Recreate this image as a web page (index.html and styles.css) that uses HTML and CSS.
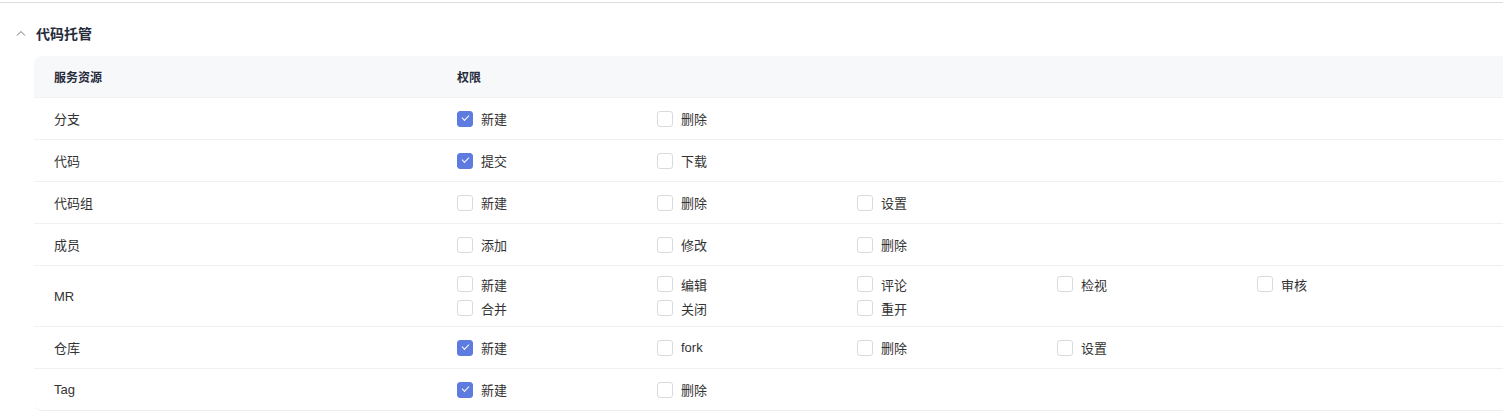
FILE: index.html
```html
<!DOCTYPE html>
<html lang="zh-CN">

<head>
  <meta charset="UTF-8">
  <meta name="viewport" content="width=device-width, initial-scale=1.0">
  <title>代码托管</title>
  <link rel="stylesheet" href="styles.css">
</head>

<body>
  <div class="topline"></div>

  <div class="section">
    <div class="section-title">
      <svg class="chevron" width="10" height="6" viewBox="0 0 10 6">
        <polyline points="1,5.5 5,1.5 9,5.5" fill="none" stroke="#71757f" stroke-width="1" />
      </svg>
      <span>代码托管</span>
    </div>

    <div class="table">
      <div class="row head">
        <div class="name">服务资源</div>
        <div class="perms">权限</div>
      </div>

      <div class="row">
        <div class="name">分支</div>
        <div class="perms">
          <label class="item checked"><i class="box"></i>新建</label>
          <label class="item"><i class="box"></i>删除</label>
        </div>
      </div>

      <div class="row">
        <div class="name">代码</div>
        <div class="perms">
          <label class="item checked"><i class="box"></i>提交</label>
          <label class="item"><i class="box"></i>下载</label>
        </div>
      </div>

      <div class="row">
        <div class="name">代码组</div>
        <div class="perms">
          <label class="item"><i class="box"></i>新建</label>
          <label class="item"><i class="box"></i>删除</label>
          <label class="item"><i class="box"></i>设置</label>
        </div>
      </div>

      <div class="row">
        <div class="name">成员</div>
        <div class="perms">
          <label class="item"><i class="box"></i>添加</label>
          <label class="item"><i class="box"></i>修改</label>
          <label class="item"><i class="box"></i>删除</label>
        </div>
      </div>

      <div class="row">
        <div class="name">MR</div>
        <div class="perms">
          <label class="item"><i class="box"></i>新建</label>
          <label class="item"><i class="box"></i>编辑</label>
          <label class="item"><i class="box"></i>评论</label>
          <label class="item"><i class="box"></i>检视</label>
          <label class="item"><i class="box"></i>审核</label>
          <label class="item"><i class="box"></i>合并</label>
          <label class="item"><i class="box"></i>关闭</label>
          <label class="item"><i class="box"></i>重开</label>
        </div>
      </div>

      <div class="row">
        <div class="name">仓库</div>
        <div class="perms">
          <label class="item checked"><i class="box"></i>新建</label>
          <label class="item"><i class="box"></i>fork</label>
          <label class="item"><i class="box"></i>删除</label>
          <label class="item"><i class="box"></i>设置</label>
        </div>
      </div>

      <div class="row">
        <div class="name">Tag</div>
        <div class="perms">
          <label class="item checked"><i class="box"></i>新建</label>
          <label class="item"><i class="box"></i>删除</label>
        </div>
      </div>
    </div>
  </div>
</body>

</html>
```

FILE: styles.css
```css
* {
  margin: 0;
  padding: 0;
  box-sizing: border-box;
}

body {
  font-family: "Liberation Sans", "Noto Sans CJK SC", sans-serif;
  font-size: 13px;
  color: #333;
  background: #fff;
  overflow: hidden;
  width: 1503px;
}

.topline {
  height: 3px;
  border-bottom: 1px solid #dcdde0;
}

.section-title {
  display: flex;
  align-items: center;
  height: 53px;
  padding: 6px 0 0 16px;
  font-size: 14px;
  font-weight: bold;
  color: #252b3a;
}

.chevron {
  margin-right: 10px;
}

.table {
  margin-left: 34px;
  width: 1500px;
  border-bottom: 1px solid #eceef2;
  border-radius: 8px 0 0 8px;
  overflow: hidden;
}

.row {
  display: flex;
  align-items: center;
  min-height: 42px;
  border-bottom: 1px solid #eef0f3;
}

.row:last-child {
  border-bottom: none;
  min-height: 41px;
}

.row.head {
  background-color: #f7f8fa;
  border-bottom: 1px solid #f0f1f4;
  font-size: 12px;
  font-weight: bold;
  color: #252b3a;
}

.name {
  width: 423px;
  padding-left: 20px;
  flex-shrink: 0;
}

.perms {
  display: flex;
  flex-wrap: wrap;
  width: 1000px;
  padding: 6px 0;
}

.head .perms {
  padding: 0;
}

.item {
  display: flex;
  align-items: center;
  width: 200px;
  height: 24px;
  color: #333;
}

.box {
  width: 16px;
  height: 16px;
  margin-right: 8px;
  border: 1px solid #d8dae0;
  border-radius: 3px;
  background: #fff;
  position: relative;
}

.checked .box {
  background-color: #5e7ce0;
  border-color: #5e7ce0;
}

.checked .box::after {
  content: "";
  position: absolute;
  left: 4px;
  top: 3px;
  width: 6px;
  height: 3px;
  border-left: 1.5px solid #fff;
  border-bottom: 1.5px solid #fff;
  transform: rotate(-45deg);
}
```
